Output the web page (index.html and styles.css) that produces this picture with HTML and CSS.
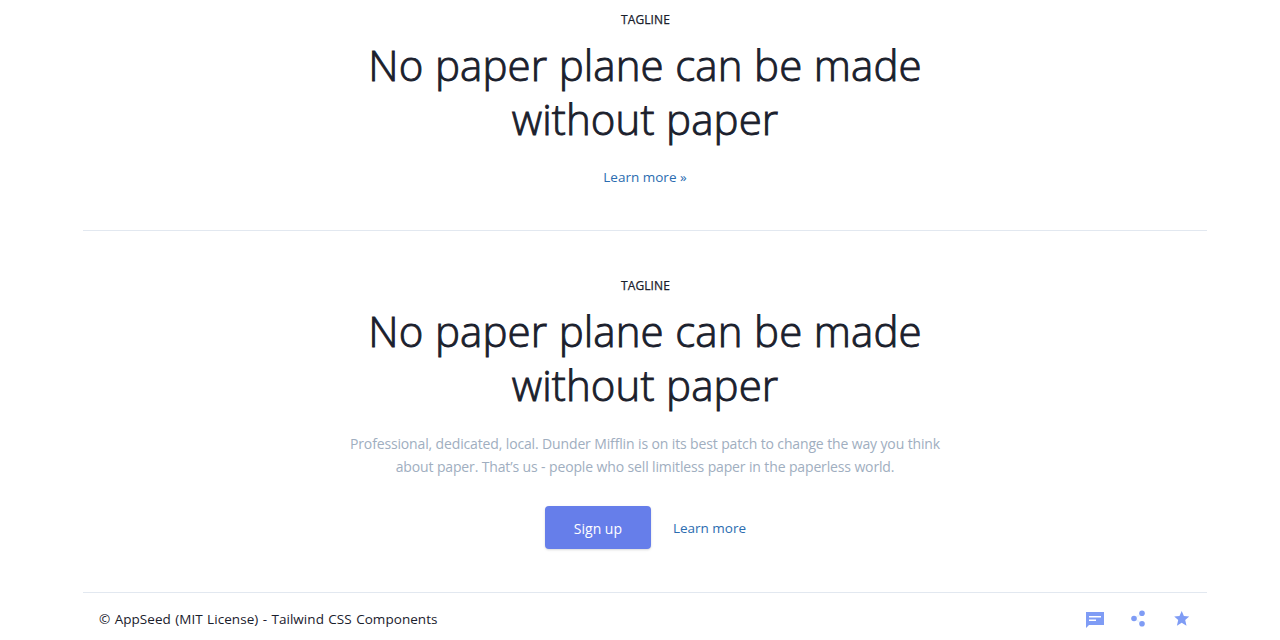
FILE: index.html
```html
<!DOCTYPE html>
<html lang="en">
<head>
<meta charset="utf-8">
<title>Tailwind CSS Components</title>
<link rel="stylesheet" href="styles.css">
</head>
<body>
<main class="container">
  <section class="hero hero-first">
    <p class="tagline">TAGLINE</p>
    <h2 class="title">No paper plane can be made<br>without paper</h2>
    <p class="more"><a class="link" href="#">Learn more »</a></p>
  </section>
  <section class="hero hero-second">
    <p class="tagline">TAGLINE</p>
    <h2 class="title">No paper plane can be made<br>without paper</h2>
    <p class="lead">Professional, dedicated, local. Dunder Mifflin is on its best patch to change the way you think<br>about paper. That’s us - people who sell limitless paper in the paperless world.</p>
    <div class="actions">
      <a class="button" href="#">Sign up</a>
      <a class="link" href="#">Learn more</a>
    </div>
  </section>
  <footer class="footer">
    <p class="copyright">© AppSeed (MIT License) - Tailwind CSS Components</p>
    <nav class="icons">
      <svg class="icon" viewBox="0 0 20 20"><path fill-rule="evenodd" d="M1 3h18v13H4l-3 3zM4 7v1.500h12V7zM4 10.500V12h7v-1.500z"/></svg>
      <svg class="icon" viewBox="0 0 20 20"><path class="strand" d="M13 4.500 5 9.500l8 5"/><circle cx="13" cy="4.300" r="2.800"/><circle cx="5" cy="9.500" r="2.800"/><circle cx="13" cy="14.700" r="2.800"/></svg>
      <svg class="icon" viewBox="0 0 20 20"><path d="m9.700 2 2.200 5 5.300.5-4 3.600 1.300 5.600-4.800-3-4.800 3 1.300-5.600-4-3.600 5.300-.5z"/></svg>
    </nav>
  </footer>
</main>
</body>
</html>
```
FILE: styles.css
```css
* { box-sizing: border-box; }
body {
  margin: 0;
  height: 640px;
  overflow: hidden;
  background: #fff;
  color: #1a202c;
  font-family: "Open Sans", "Noto Sans", sans-serif;
  font-size: 13.500px;
}
p, h2 { margin: 0; }
.container { width: 1124px; margin-left: 83px; }
.hero { text-align: center; border-bottom: 1px solid #e2e8f0; }
.hero-first { height: 231px; padding-top: 10px; }
.hero-second { height: 362px; padding-top: 45px; }
.tagline { padding-left: 1px; font-size: 12px; line-height: 20px; letter-spacing: .1px; -webkit-text-stroke: .25px #1a202c; }
.title {
  margin-top: 8px;
  font-size: 42px;
  line-height: 54px;
  font-weight: 300;
  letter-spacing: .1px;
  word-spacing: .5px;
  -webkit-text-stroke: .9px #1a202c;
}
.more { margin-top: 20px; line-height: 22px; }
.link { color: #2b6cb0; text-decoration: none; }
.lead { margin-top: 20px; color: #a0aec0; font-size: 14px; line-height: 23px; letter-spacing: -.15px; word-spacing: .1px; }
.actions { display: flex; justify-content: center; align-items: center; gap: 22px; margin-top: 28px; padding-left: 1px; }
.button {
  display: flex;
  align-items: center;
  justify-content: center;
  width: 106px;
  height: 43px;
  padding-top: 2px;
  border-radius: 4px;
  background: #667eea;
  box-shadow: 0 1px 3px rgba(0, 0, 0, .1), 0 1px 2px rgba(0, 0, 0, .06);
  color: #fff;
  font-size: 14px;
  text-decoration: none;
}
.footer { display: flex; justify-content: space-between; align-items: center; height: 52px; padding: 0 15px; }
.copyright { padding-left: 1px; letter-spacing: .05px; word-spacing: .8px; }
.icons { display: flex; gap: 23.500px; }
.icon { width: 20px; height: 20px; fill: #7f9cf5; }
.strand { fill: none; stroke: #ebf4ff; stroke-width: 1.500; }
```
